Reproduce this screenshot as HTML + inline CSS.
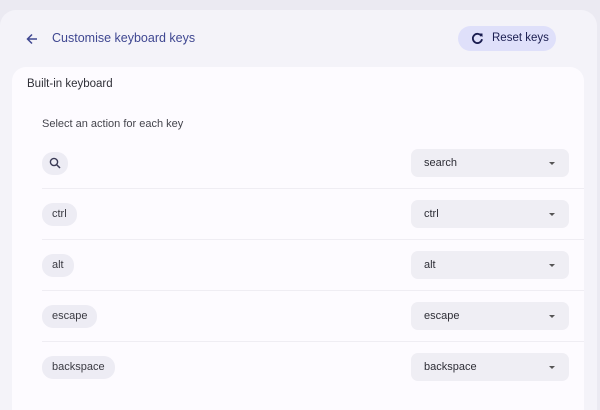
<!DOCTYPE html>
<html><head><style>
*{margin:0;padding:0;box-sizing:border-box}
html,body{width:600px;height:410px;overflow:hidden}
body{background:#ebeaf2;font-family:"Liberation Sans",sans-serif;position:relative}
.panel{position:absolute;left:0;top:10px;width:597px;height:400px;background:#f4f3f9;border-radius:16px 16px 0 0}
.card{position:absolute;left:12px;top:67px;width:572px;height:343px;background:#fdfbff;border-radius:14px 14px 0 0}
.title{position:absolute;left:52px;top:31px;font-size:12.5px;color:#3f4791}
.arrow{position:absolute;left:24px;top:31px}
.reset{position:absolute;left:458px;top:26px;width:98px;height:25px;border-radius:13px;background:#dfe0fa;color:#1a1d50;font-size:11.5px}
.reset span{position:absolute;left:34px;top:6px}
.reset svg{position:absolute;left:13px;top:6px}
.h1{position:absolute;left:27px;top:78px;font-size:11.5px;color:#303038}
.h2{position:absolute;left:42px;top:118px;font-size:11px;color:#44444c}
.chip{position:absolute;left:42px;height:23px;border-radius:11px;background:#edecf4;font-size:11px;color:#3a3a42;padding:5px 10px 0 10px}
.dd{position:absolute;left:411px;width:158px;height:28px;border-radius:7px;background:#efeef4;font-size:11px;color:#2e2e36;padding:8px 0 0 13px}
.dd:after{content:"";position:absolute;right:14px;top:13px;border-left:3px solid transparent;border-right:3px solid transparent;border-top:3px solid #555}
.div{position:absolute;left:42px;width:542px;height:1px;background:#efedf3}
</style></head><body>
<div class="panel"></div>
<svg class="arrow" width="16" height="16" viewBox="0 0 16 16"><path d="M13 8H3.5M8 3.5L3.5 8 8 12.5" stroke="#3f4791" stroke-width="1.5" fill="none"/></svg>
<div class="title">Customise keyboard keys</div>
<div class="reset"><svg width="13" height="13" viewBox="0 0 13 13"><path d="M10.5 4.2A4.6 4.6 0 1 0 11 7.2" stroke="#1a1d50" stroke-width="1.8" fill="none"/><path d="M8 1.5h3.5V5z" fill="#1a1d50"/></svg><span>Reset keys</span></div>
<div class="card"></div>
<div class="h1">Built-in keyboard</div>
<div class="h2">Select an action for each key</div>

<div class="chip" style="top:152px;width:26px;padding:0"><svg width="26" height="23" viewBox="0 0 26 23"><circle cx="12" cy="10" r="3.6" stroke="#3a3a55" stroke-width="1.4" fill="none"/><path d="M14.6 12.6L18 16" stroke="#3a3a55" stroke-width="1.5"/></svg></div>
<div class="dd" style="top:149px">search</div>
<div class="div" style="top:188px"></div>
<div class="chip" style="top:203px">ctrl</div>
<div class="dd" style="top:200px">ctrl</div>
<div class="div" style="top:239px"></div>
<div class="chip" style="top:254px">alt</div>
<div class="dd" style="top:251px">alt</div>
<div class="div" style="top:290px"></div>
<div class="chip" style="top:305px">escape</div>
<div class="dd" style="top:302px">escape</div>
<div class="div" style="top:341px"></div>
<div class="chip" style="top:356px">backspace</div>
<div class="dd" style="top:353px">backspace</div>
</body></html>
